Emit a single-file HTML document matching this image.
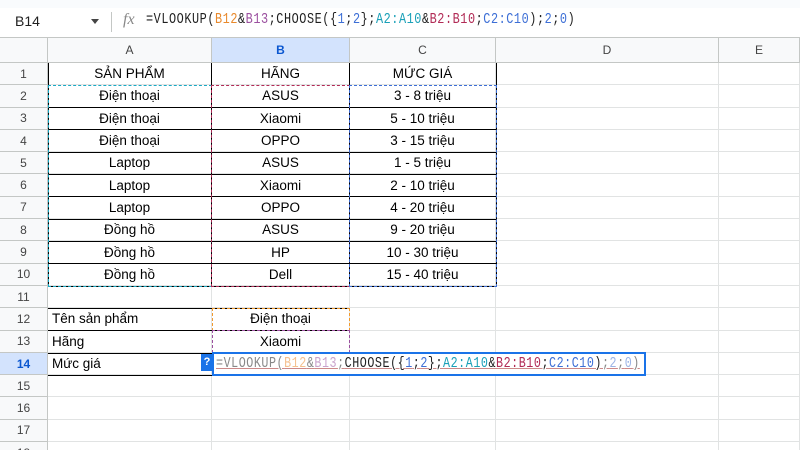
<!DOCTYPE html>
<html><head><meta charset="utf-8"><style>
*{margin:0;padding:0;box-sizing:border-box}
html,body{width:800px;height:450px;overflow:hidden}
body{background:#fff;font-family:"Liberation Sans",sans-serif;position:relative}
.abs{position:absolute}
.gw{position:absolute;left:0;top:0;width:800px;height:450px;overflow:hidden}
.grid{position:absolute;left:0;top:38px;display:grid;grid-template-columns:48px 164px 138px 146px 223px 81px;grid-template-rows:25px repeat(18,22.3px)}
.grid div{border-right:1px solid #e1e3e3;border-bottom:1px solid #e1e3e3;display:flex;align-items:center;justify-content:center;font-size:13.5px;color:#000;white-space:nowrap;overflow:visible}
.grid .h{background:#f8f9fa;color:#444;font-size:12px;border-color:#c4c7c5}
.grid .hs{background:#d3e3fd;color:#0b57d0;font-weight:bold}
.grid .l{justify-content:flex-start;padding-left:4px}
.mono{font-family:"Liberation Mono",monospace;font-size:15px;letter-spacing:0.7px;white-space:nowrap;transform-origin:0 0}
.o{color:#e8892c}.p{color:#9b4f9f}.b{color:#3d6fd6}.t{color:#1aa0b8}.r{color:#b12a55}
</style></head><body>
<div class="gw">
<div class="grid">
<div class="h"></div><div class="h">A</div><div class="h hs">B</div><div class="h">C</div><div class="h">D</div><div class="h">E</div>
<div class="h">1</div><div>SẢN PHẨM</div><div>HÃNG</div><div>MỨC GIÁ</div><div></div><div></div>
<div class="h">2</div><div>Điện thoại</div><div>ASUS</div><div>3 - 8 triệu</div><div></div><div></div>
<div class="h">3</div><div>Điện thoại</div><div>Xiaomi</div><div>5 - 10 triệu</div><div></div><div></div>
<div class="h">4</div><div>Điện thoại</div><div>OPPO</div><div>3 - 15 triệu</div><div></div><div></div>
<div class="h">5</div><div>Laptop</div><div>ASUS</div><div>1 - 5 triệu</div><div></div><div></div>
<div class="h">6</div><div>Laptop</div><div>Xiaomi</div><div>2 - 10 triệu</div><div></div><div></div>
<div class="h">7</div><div>Laptop</div><div>OPPO</div><div>4 - 20 triệu</div><div></div><div></div>
<div class="h">8</div><div>Đồng hồ</div><div>ASUS</div><div>9 - 20 triệu</div><div></div><div></div>
<div class="h">9</div><div>Đồng hồ</div><div>HP</div><div>10 - 30 triệu</div><div></div><div></div>
<div class="h">10</div><div>Đồng hồ</div><div>Dell</div><div>15 - 40 triệu</div><div></div><div></div>
<div class="h">11</div><div></div><div></div><div></div><div></div><div></div>
<div class="h">12</div><div class="l">Tên sản phẩm</div><div>Điện thoại</div><div></div><div></div><div></div>
<div class="h">13</div><div class="l">Hãng</div><div>Xiaomi</div><div></div><div></div><div></div>
<div class="h hs">14</div><div class="l">Mức giá</div><div></div><div></div><div></div><div></div>
<div class="h">15</div><div></div><div></div><div></div><div></div><div></div>
<div class="h">16</div><div></div><div></div><div></div><div></div><div></div>
<div class="h">17</div><div></div><div></div><div></div><div></div><div></div>
<div class="h">18</div><div></div><div></div><div></div><div></div><div></div>
</div>
</div>
<div class="abs" style="left:0;top:0;width:800px;height:8px;background:#f9fbfd"></div>
<div class="abs" style="left:0;top:8px;width:800px;height:30px;border-bottom:1px solid #c4c7c5;background:#fff"></div>
<div class="abs" style="left:15px;top:13px;font-size:14px;color:#1f1f1f">B14</div>
<div class="abs" style="left:91px;top:19px;width:0;height:0;border-left:4px solid transparent;border-right:4px solid transparent;border-top:5px solid #444"></div>
<div class="abs" style="left:111px;top:12px;width:1px;height:20px;background:#c4c7c5"></div>
<div class="abs" style="left:123px;top:11px;font-family:'Liberation Serif',serif;font-style:italic;font-size:16px;color:#888">fx</div>
<div class="abs mono" style="left:146px;top:11px;color:#1f1f1f;transform:scaleX(0.79)">=VLOOKUP(<span class="o">B12</span>&amp;<span class="p">B13</span>;CHOOSE({<span class="b">1</span>;<span class="b">2</span>};<span class="t">A2:A10</span>&amp;<span class="r">B2:B10</span>;<span class="b">C2:C10</span>);<span class="b">2</span>;<span class="b">0</span>)</div>

<div class="abs" style="left:48px;top:63px;width:449px;height:224px;border:1px solid #000;border-top:none"></div>
<div class="abs" style="left:211px;top:63px;width:1px;height:224px;background:#000"></div>
<div class="abs" style="left:349px;top:63px;width:1px;height:224px;background:#000"></div>
<div class="abs" style="left:48px;top:107px;width:449px;height:1px;background:#000"></div>
<div class="abs" style="left:48px;top:129px;width:449px;height:1px;background:#000"></div>
<div class="abs" style="left:48px;top:152px;width:449px;height:1px;background:#000"></div>
<div class="abs" style="left:48px;top:174px;width:449px;height:1px;background:#000"></div>
<div class="abs" style="left:48px;top:196px;width:449px;height:1px;background:#000"></div>
<div class="abs" style="left:48px;top:219px;width:449px;height:1px;background:#000"></div>
<div class="abs" style="left:48px;top:241px;width:449px;height:1px;background:#000"></div>
<div class="abs" style="left:48px;top:263px;width:449px;height:1px;background:#000"></div>
<div class="abs" style="left:48px;top:308px;width:302px;height:1px;background:#000"></div>
<div class="abs" style="left:48px;top:330px;width:302px;height:1px;background:#000"></div>
<div class="abs" style="left:48px;top:353px;width:302px;height:1px;background:#000"></div>
<div class="abs" style="left:48px;top:375px;width:164px;height:1px;background:#000"></div>

<div class="abs" style="left:48px;top:85px;width:164px;height:202px;border:1.5px dashed #1aa9c4"></div>
<div class="abs" style="left:211px;top:85px;width:139px;height:202px;border:1.5px dashed #b12a55"></div>
<div class="abs" style="left:349px;top:85px;width:148px;height:202px;border:1.5px dashed #3d6fd6"></div>
<div class="abs" style="left:212px;top:308px;width:138px;height:23px;border:1.5px dashed #f29a2e"></div>
<div class="abs" style="left:212px;top:330px;width:138px;height:23px;border:1.5px dashed #9b4f9f"></div>

<div class="abs" style="left:201px;top:354px;width:12px;height:17px;background:#1a73e8;color:#fff;font-size:11px;font-weight:bold;text-align:center;line-height:17px">?</div>
<div class="abs" style="left:212px;top:352px;width:434px;height:24px;border:2px solid #1a73e8;background:#fff"></div>
<div class="abs mono" style="left:216px;top:355px;color:#888;text-decoration:underline;text-decoration-color:#c88;transform:scaleX(0.78)">=VLOOKUP(<span style="color:#f5c08e">B12</span>&amp;<span style="color:#c9a3cc">B13</span>;<span style="color:#1f1f1f">CHOOSE({<span class="b">1</span>;<span class="b">2</span>};<span class="t">A2:A10</span>&amp;<span class="r">B2:B10</span>;<span class="b">C2:C10</span>)</span>;<span style="color:#9bb4e6">2</span>;<span style="color:#9bb4e6">0</span>)</div>
</body></html>
